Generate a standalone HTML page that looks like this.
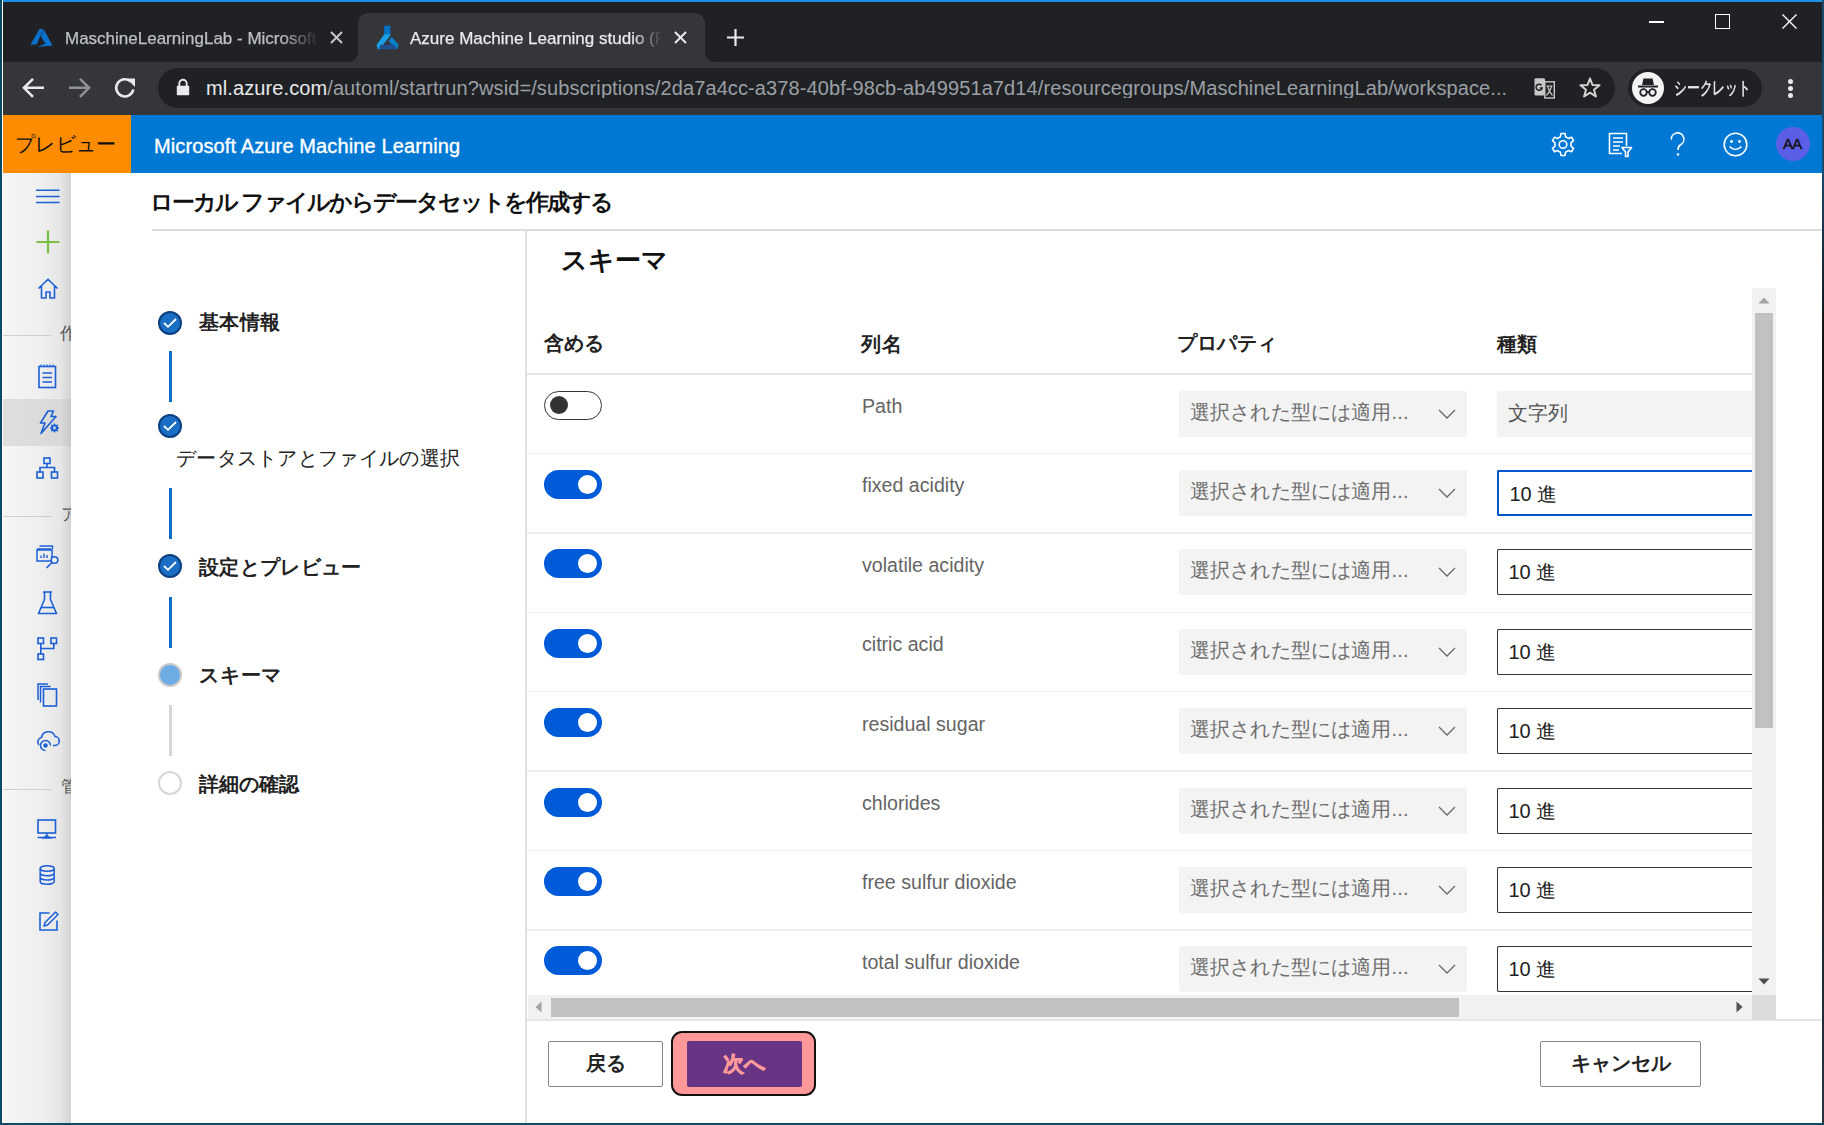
<!DOCTYPE html>
<html lang="ja"><head><meta charset="utf-8">
<style>
*{box-sizing:border-box;margin:0;padding:0}
html,body{width:1824px;height:1125px;overflow:hidden;background:#fff;font-family:"Liberation Sans",sans-serif;position:relative}
.a{position:absolute}
.t{position:absolute;white-space:nowrap;line-height:1}
svg{position:absolute;overflow:visible}
#titlebar{left:0;top:0;width:1824px;height:62px;background:#202124}
#topline{left:0;top:0;width:1824px;height:2px;background:#1e8fe6}
#tab2{left:358px;top:13px;width:347px;height:49px;background:#35363a;border-radius:10px 10px 0 0}
#toolbar{left:0;top:62px;width:1824px;height:53px;background:#35363a}
#omni{left:157.5px;top:68px;width:1457.5px;height:40px;border-radius:20px;background:#202124}
#incog{left:1628px;top:69px;width:134px;height:38px;border-radius:19px;background:#202124}
#hdr{left:0;top:115px;width:1824px;height:58px;background:#0078d4}
#prev{left:0;top:115px;width:131px;height:58px;background:#ff8c00}
#nav{left:0;top:173px;width:71px;height:952px;background:linear-gradient(to right,#f6f6f6 0%,#efefef 55%,#e6e6e6 85%,#d2d2d2 100%)}
#navsel{left:2px;top:399px;width:69px;height:47px;background:linear-gradient(to right,#dedede 0%,#d9d9d9 85%,#c9c9c9 100%)}
#lborder{left:0;top:0;width:1.6px;height:1125px;background:#0b4a66;box-shadow:1px 0 0 #fff}
#rborder{left:1822px;top:0;width:2px;height:1125px;background:linear-gradient(#1b4a6e 0%,#1b4a6e 15%,#111 30%,#111 60%,#2a3440 100%)}
#bborder{left:0;top:1123px;width:1824px;height:2px;background:#154a66}
.navsep{position:absolute;left:2px;width:50px;height:1px;background:#cfcfcf;margin-top:1px}
.row{position:absolute;left:527px;width:1225px;height:1.5px;background:#efefef}
.tog{position:absolute;left:544px;width:58px;height:29px;border-radius:15px}
.tog.on{background:#005bd8}
.tog.on::after{content:"";position:absolute;left:34px;top:5px;width:19px;height:19px;border-radius:50%;background:#fff}
.tog.off{border:1.5px solid #333;background:#fff}
.tog.off::after{content:"";position:absolute;left:5px;top:4.5px;width:18px;height:18px;border-radius:50%;background:#333}
.cname{position:absolute;left:862px;font-size:19.6px;color:#646464;white-space:nowrap;line-height:1}
.dd{position:absolute;left:1179px;width:288px;height:46px;background:#f3f3f3;border-radius:2px}
.ddt{position:absolute;left:11px;top:11px;font-size:20px;letter-spacing:0.15px;color:#6e6e6e;white-space:nowrap;line-height:1}
.ddc{position:absolute;left:259px;top:18px}
.ty{position:absolute;left:1496.5px;width:255px;height:46px;border:1.5px solid #333;background:#fff;border-radius:2px 0 0 2px;border-right:none}
.ty.sel{border:2.5px solid #0058d0;border-right:none}
.tyt{position:absolute;left:11px;top:12px;font-size:20px;color:#222;white-space:nowrap;line-height:1}
.step{position:absolute;left:158px;width:24px;height:24px;border-radius:50%}
.step.done{background:#1a6ec4;border:2px solid #0b3f80}
.sline{position:absolute;left:169px;width:3px;height:51px;background:#0f6cc8}
.slabel{position:absolute;font-size:20px;color:#222;white-space:nowrap;line-height:1}
.btn{position:absolute;height:46px;border:1.5px solid #8a8886;border-radius:2px;background:#fff;font-size:20px;font-weight:bold;color:#222;text-align:center;line-height:43px}
</style></head><body>
<div class="a" id="titlebar"></div>
<div class="a" id="topline"></div>
<div class="a" id="tab2"></div>
<div class="a" id="toolbar"></div>
<div class="a" style="left:348px;top:52px;width:10px;height:10px;background:radial-gradient(circle at 0 0,#202124 9.5px,#35363a 10.5px)"></div>
<div class="a" style="left:705px;top:52px;width:10px;height:10px;background:radial-gradient(circle at 100% 0,#202124 9.5px,#35363a 10.5px)"></div>

<div class="a" id="omni"></div>
<div class="a" id="incog"></div>
<div class="a" id="hdr"></div>
<div class="a" id="prev"></div>
<div class="a" id="nav"></div>
<div class="a" id="navsel"></div>

<!-- chrome -->
<svg style="left:30px;top:28px" width="23" height="20" viewBox="0 0 23 20"><path d="M9.5 1 L13.5 1 L6.5 16.5 L0.5 16.5 Z" fill="#0b72cc"/><path d="M13.8 1.5 L22.5 17.5 L7.5 19 L15.5 15.5 L10.8 8.5 Z" fill="#0b72cc"/></svg>
<div class="t" style="left:65px;top:30px;font-size:17px;color:#bdc1c6;-webkit-text-stroke:0.25px #bdc1c6;width:253px;overflow:hidden;-webkit-mask-image:linear-gradient(to right,#000 85%,transparent 100%)">MaschineLearningLab - Microsoft Azure</div>
<svg style="left:330px;top:31px" width="13" height="13" viewBox="0 0 13 13"><path d="M1 1 L12 12 M12 1 L1 12" stroke="#c8cacd" stroke-width="1.9"/></svg>
<svg style="left:365px;top:15px" width="60" height="45" viewBox="0 0 60 45"><rect x="19.2" y="10.8" width="6.2" height="8.8" fill="#0072c6"/><path d="M19.2 19.3 L25.4 19.3 L25 21 L14.5 34.2 L12.8 34.2 L11.5 30 Z" fill="#1a9fe6"/><path d="M26.7 22 L33.5 29.5 L32.2 34.2 L31 34.2 L23.5 26 Z" fill="#0a7fcc"/><path d="M15.5 29.8 L29.8 29.8 L31.5 34.2 L14 34.2 Z" fill="#1e4f91"/></svg>
<div class="t" style="left:410px;top:30px;font-size:17px;color:#e8eaed;-webkit-text-stroke:0.25px #e8eaed;width:252px;overflow:hidden;-webkit-mask-image:linear-gradient(to right,#000 88%,transparent 100%)">Azure Machine Learning studio (Preview)</div>
<svg style="left:674px;top:31px" width="13" height="13" viewBox="0 0 13 13"><path d="M1 1 L12 12 M12 1 L1 12" stroke="#e8eaed" stroke-width="2"/></svg>
<svg style="left:726px;top:28px" width="19" height="19" viewBox="0 0 19 19"><path d="M9.5 1 V18 M1 9.5 H18" stroke="#e8eaed" stroke-width="2.2"/></svg>
<div class="a" style="left:1649px;top:21px;width:15px;height:1.6px;background:#fff"></div>
<div class="a" style="left:1715px;top:14px;width:15px;height:15px;border:1.6px solid #fff"></div>
<svg style="left:1782px;top:14px" width="15" height="15" viewBox="0 0 15 15"><path d="M0.5 0.5 L14.5 14.5 M14.5 0.5 L0.5 14.5" stroke="#fff" stroke-width="1.4"/></svg>
<svg style="left:22px;top:77px" width="23" height="22" viewBox="0 0 23 22"><path d="M22 10.8 H3.5 M11 1.8 L2 10.8 L11 19.8" fill="none" stroke="#e8eaed" stroke-width="2.6"/></svg>
<svg style="left:68px;top:77px" width="23" height="22" viewBox="0 0 23 22"><path d="M1 10.8 H19.5 M12 1.8 L21 10.8 L12 19.8" fill="none" stroke="#8e9196" stroke-width="2.6"/></svg>
<svg style="left:114px;top:76px" width="23" height="23" viewBox="0 0 23 23"><path d="M19.3 13.5 A8.6 8.6 0 1 1 16.8 5.6" fill="none" stroke="#e8eaed" stroke-width="2.6"/><path d="M12.6 2.5 H21 V10.9 Z" fill="#e8eaed"/></svg>
<svg style="left:176px;top:78px" width="14" height="18" viewBox="0 0 14 18"><path d="M3.3 8 V5.5 A3.7 3.7 0 0 1 10.7 5.5 V8" fill="none" stroke="#e8eaed" stroke-width="1.9"/><rect x="0.8" y="7.8" width="12.4" height="9.4" rx="0.8" fill="#e8eaed"/></svg>
<div class="t" style="left:206px;top:78px;font-size:20px;letter-spacing:0.1px;color:#9aa0a6;width:1304px;overflow:hidden"><span style="color:#e8eaed">ml.azure.com</span>/automl/startrun?wsid=/subscriptions/2da7a4cc-a378-40bf-98cb-ab49951a7d14/resourcegroups/MaschineLearningLab/workspace...</div>
<svg style="left:1533.5px;top:77.5px" width="22" height="22" viewBox="0 0 22 22"><rect x="0.5" y="0.3" width="10.5" height="17.2" rx="1.2" fill="#c8c8c8"/><path d="M7.6 7.3 A3.1 3.1 0 1 0 8.2 10 H5.6" fill="none" stroke="#202124" stroke-width="1.5"/><rect x="10.8" y="3.8" width="9.5" height="16.2" fill="#202124" stroke="#c8c8c8" stroke-width="1.4"/><path d="M12.5 8 H18.5 M13.5 8 Q15 14 18.5 17.5 M17.5 8.5 Q16 14 12.5 17.5" fill="none" stroke="#c8c8c8" stroke-width="1.2"/></svg>
<svg style="left:1579px;top:77px" width="22" height="21" viewBox="0 0 22 21"><path d="M11 1.5 L13.5 8 L20.5 8.3 L15 12.8 L16.9 19.5 L11 15.7 L5.1 19.5 L7 12.8 L1.5 8.3 L8.5 8 Z" fill="none" stroke="#d4d4d4" stroke-width="2" stroke-linejoin="round"/></svg>
<div class="a" style="left:1632px;top:72px;width:32px;height:32px;border-radius:50%;background:#f1f3f4"></div>
<svg style="left:1636px;top:77px" width="24" height="22" viewBox="0 0 24 22"><path d="M6 8 L7.5 1.5 H16.5 L18 8 Z" fill="#202124"/><rect x="2" y="8.5" width="20" height="2" fill="#202124"/><circle cx="7.5" cy="15.5" r="3.3" fill="none" stroke="#202124" stroke-width="1.8"/><circle cx="16.5" cy="15.5" r="3.3" fill="none" stroke="#202124" stroke-width="1.8"/><path d="M10.8 15 H13.2" stroke="#202124" stroke-width="1.8"/></svg>
<div class="t" style="left:1674px;top:79px;font-size:18px;color:#e8eaed;-webkit-text-stroke:0.5px #e8eaed;transform:scaleX(0.71);transform-origin:0 0">シークレット</div>
<div class="a" style="left:1788px;top:79px;width:5px;height:5px;border-radius:50%;background:#e8eaed"></div>
<div class="a" style="left:1788px;top:86px;width:5px;height:5px;border-radius:50%;background:#e8eaed"></div>
<div class="a" style="left:1788px;top:93px;width:5px;height:5px;border-radius:50%;background:#e8eaed"></div>
<!-- aml header -->
<div class="t" style="left:15px;top:134px;font-size:20px;letter-spacing:0.3px;color:#111">プレビュー</div>
<div class="t" style="left:154px;top:136px;font-size:20px;letter-spacing:0.12px;color:#fff;-webkit-text-stroke:0.35px #fff">Microsoft Azure Machine Learning</div>
<svg style="left:1550px;top:132px" width="26" height="26" viewBox="0 0 26 26"><path d="M11 1.5 H15 L15.6 4.8 L18.4 6.4 L21.5 5.2 L23.5 8.7 L21 10.9 V14.1 L23.5 16.3 L21.5 19.8 L18.4 18.6 L15.6 20.2 L15 23.5 H11 L10.4 20.2 L7.6 18.6 L4.5 19.8 L2.5 16.3 L5 14.1 V10.9 L2.5 8.7 L4.5 5.2 L7.6 6.4 L10.4 4.8 Z" fill="none" stroke="#fff" stroke-width="1.6" stroke-linejoin="round"/><circle cx="13" cy="12.5" r="3.8" fill="none" stroke="#fff" stroke-width="1.6"/></svg>
<svg style="left:1608px;top:132px" width="26" height="26" viewBox="0 0 26 26"><path d="M14 21.5 H1.5 V1.5 H18.5 V14" fill="none" stroke="#fff" stroke-width="1.6"/><path d="M5 6 H15 M5 10 H15 M5 14 H12 M5 18 H11" stroke="#fff" stroke-width="1.6"/><path d="M14 15.5 H23.5 L20 20 V24.5 L17.5 24.5 V20 Z" fill="none" stroke="#fff" stroke-width="1.6" stroke-linejoin="round"/></svg>
<svg style="left:1669px;top:132px" width="18" height="25" viewBox="0 0 18 25"><path d="M2.3 7.5 A6.3 6.3 0 1 1 11.5 12.8 C9.7 13.8 9 15 9 18" fill="none" stroke="#fff" stroke-width="1.6"/><circle cx="9" cy="22.5" r="1.2" fill="#fff"/></svg>
<svg style="left:1723px;top:132px" width="25" height="25" viewBox="0 0 25 25"><circle cx="12.5" cy="12.5" r="11.3" fill="none" stroke="#fff" stroke-width="1.6"/><circle cx="8.5" cy="9.5" r="1.4" fill="#fff"/><circle cx="16.5" cy="9.5" r="1.4" fill="#fff"/><path d="M6.5 14.5 Q12.5 20.5 18.5 14.5" fill="none" stroke="#fff" stroke-width="1.6"/></svg>
<div class="a" style="left:1776px;top:127px;width:34px;height:34px;border-radius:50%;background:#5b5fe8"></div>
<div class="t" style="left:1783px;top:136px;font-size:15px;font-weight:normal;-webkit-text-stroke:0.4px #111;color:#111;letter-spacing:-0.8px">AA</div>



<!-- nav icons -->
<svg style="left:36px;top:189px" width="24" height="15" viewBox="0 0 24 15"><path d="M0 1.3 H23.5 M0 7.5 H23.5 M0 13.5 H23.5" stroke="#1a5fd6" stroke-width="1.5"/></svg>
<svg style="left:36px;top:230px" width="24" height="24" viewBox="0 0 24 24"><path d="M12 0.5 V23.5 M0.5 12 H23.5" stroke="#7ac143" stroke-width="2.2"/></svg>
<svg style="left:37px;top:278px" width="22" height="21" viewBox="0 0 22 21"><path d="M1.5 10.5 L11 1.3 L20.5 10.5 M4.5 8 V20 H9 V14 H13 V20 H17.5 V8" fill="none" stroke="#1a5fd6" stroke-width="1.6" stroke-linejoin="round"/></svg>
<div class="navsep" style="top:334px"></div>
<div class="t" style="left:60px;top:325px;font-size:17px;color:#555;width:11px;overflow:hidden">作</div>
<svg style="left:38px;top:364px" width="19" height="25" viewBox="0 0 19 25"><rect x="1" y="2.5" width="16.5" height="21" fill="none" stroke="#1a5fd6" stroke-width="1.6"/><path d="M4.5 9 H14 M4.5 13.5 H14 M4.5 18 H14" stroke="#1a5fd6" stroke-width="1.6"/><path d="M3 0.5 V2.5 M6 0.5 V2.5 M9 0.5 V2.5 M12 0.5 V2.5 M15 0.5 V2.5" stroke="#1a5fd6" stroke-width="1.2"/></svg>
<svg style="left:39px;top:410px" width="21" height="25" viewBox="0 0 21 25"><path d="M9 1 H14.5 L12 6.5 H17 L2 23.5 L6 13 H1.5 Z" fill="none" stroke="#1a5fd6" stroke-width="1.6" stroke-linejoin="round"/><circle cx="15.5" cy="18" r="2.6" fill="none" stroke="#1a5fd6" stroke-width="1.8"/><path d="M15.5 13.5 V22.5 M11 18 H20 M12.3 14.8 L18.7 21.2 M18.7 14.8 L12.3 21.2" stroke="#1a5fd6" stroke-width="1.3"/><circle cx="15.5" cy="18" r="1.4" fill="#dadada"/></svg>
<svg style="left:36px;top:457px" width="23" height="22" viewBox="0 0 23 22"><rect x="8" y="1" width="6" height="5.5" fill="none" stroke="#1a5fd6" stroke-width="1.6"/><rect x="1" y="15" width="6" height="6" fill="none" stroke="#1a5fd6" stroke-width="1.6"/><rect x="15.5" y="15" width="6" height="6" fill="none" stroke="#1a5fd6" stroke-width="1.6"/><path d="M11 6.5 V10.5 M4 15 V10.5 H18.5 V15" fill="none" stroke="#1a5fd6" stroke-width="1.6"/></svg>
<div class="navsep" style="top:515px"></div>
<div class="t" style="left:61px;top:506px;font-size:17px;color:#555;width:10px;overflow:hidden">ア</div>
<svg style="left:36px;top:545px" width="24" height="24" viewBox="0 0 24 24"><path d="M3.5 1 H16.5 V4 M1 4 H14.5 V5.5" fill="none" stroke="#1a5fd6" stroke-width="1.4"/><rect x="1" y="5" width="15" height="11" fill="none" stroke="#1a5fd6" stroke-width="1.5"/><path d="M5 13 V10.5 M8 13 V8.5 M11 13 V10" stroke="#1a5fd6" stroke-width="1.4"/><circle cx="18.5" cy="15" r="3.3" fill="#f0f0f0" stroke="#1a5fd6" stroke-width="1.6"/><path d="M16 17.5 L10.5 23" stroke="#1a5fd6" stroke-width="1.6"/></svg>
<svg style="left:37px;top:591px" width="21" height="24" viewBox="0 0 21 24"><path d="M6 1 H15 M7.5 1 V8.5 L1.5 22.5 H19.5 L13.5 8.5 V1" fill="none" stroke="#1a5fd6" stroke-width="1.6" stroke-linejoin="round"/><path d="M4 16.5 H17" stroke="#1a5fd6" stroke-width="1.6"/></svg>
<svg style="left:37px;top:637px" width="21" height="24" viewBox="0 0 21 24"><rect x="1" y="1" width="5.5" height="5.5" fill="none" stroke="#1a5fd6" stroke-width="1.6"/><rect x="14" y="1" width="5.5" height="5.5" fill="none" stroke="#1a5fd6" stroke-width="1.6"/><rect x="1" y="17" width="5.5" height="5.5" fill="none" stroke="#1a5fd6" stroke-width="1.6"/><path d="M3.8 6.5 V17 M3.8 11.5 H16.8 V6.5" fill="none" stroke="#1a5fd6" stroke-width="1.6"/></svg>
<svg style="left:37px;top:683px" width="21" height="24" viewBox="0 0 21 24"><path d="M1 17 V1 H11 M3.5 19.5 V3.5 H13.5" fill="none" stroke="#1a5fd6" stroke-width="1.5"/><rect x="6.5" y="6" width="13" height="17" fill="none" stroke="#1a5fd6" stroke-width="1.6"/></svg>
<svg style="left:36px;top:731px" width="24" height="21" viewBox="0 0 24 21"><path d="M17 14.5 H18.5 A4.5 4.5 0 0 0 19 5.5 A7 7 0 0 0 5.5 6.5 A4.5 4.5 0 0 0 3 14" fill="none" stroke="#1a5fd6" stroke-width="1.6"/><path d="M9.5 19.5 A5 5 0 1 1 14.5 14.5" fill="none" stroke="#1a5fd6" stroke-width="1.6"/><circle cx="9.5" cy="14.5" r="2.2" fill="#1a5fd6"/></svg>
<div class="navsep" style="top:788px"></div>
<div class="t" style="left:61px;top:778px;font-size:17px;color:#555;width:10px;overflow:hidden">管</div>
<svg style="left:37px;top:819px" width="20" height="21" viewBox="0 0 20 21"><rect x="1" y="1" width="17.5" height="13" fill="none" stroke="#1a5fd6" stroke-width="1.6"/><path d="M9.8 14 V16.5 M6.5 19 L9.8 16.5 L13 19 Z M0.5 18.5 H19" fill="none" stroke="#1a5fd6" stroke-width="1.5"/></svg>
<svg style="left:39px;top:865px" width="17" height="21" viewBox="0 0 17 21"><ellipse cx="8.2" cy="3.5" rx="7" ry="2.8" fill="none" stroke="#1a5fd6" stroke-width="1.5"/><path d="M1.2 3.5 V16.5 A7 2.8 0 0 0 15.2 16.5 V3.5 M1.2 8 A7 2.8 0 0 0 15.2 8 M1.2 12.3 A7 2.8 0 0 0 15.2 12.3" fill="none" stroke="#1a5fd6" stroke-width="1.5"/></svg>
<svg style="left:39px;top:911px" width="20" height="20" viewBox="0 0 20 20"><path d="M10.5 2 H1 V19 H18 V9.5" fill="none" stroke="#1a5fd6" stroke-width="1.6"/><path d="M5 15 L6 11.5 L16.5 1 L19 3.5 L8.5 14 Z" fill="none" stroke="#1a5fd6" stroke-width="1.5" stroke-linejoin="round"/></svg>

<!-- content -->
<div class="t" style="left:150px;top:191.5px;font-size:22.5px;letter-spacing:-2px;font-weight:bold;color:#111">ローカル ファイルからデータセットを作成する</div>
<div class="a" style="left:152px;top:229px;width:1670px;height:2px;background:#dcdcdc"></div>
<div class="a" style="left:525px;top:230px;width:2px;height:895px;background:#e1e1e1"></div>

<!-- steps -->
<div class="step done" style="top:311px"></div>
<div class="sline" style="top:351px"></div>
<div class="step done" style="top:414px"></div>
<div class="sline" style="top:488px"></div>
<div class="step done" style="top:554px"></div>
<div class="sline" style="top:597px"></div>
<div class="step" style="top:663px;background:#6cace4;border:2px solid #c8c8c8"></div>
<div class="sline" style="top:705px;background:#d6d6d6"></div>
<div class="step" style="top:771px;background:#fff;border:2px solid #d6d6d6"></div>
<svg style="left:163px;top:318px" width="14" height="10" viewBox="0 0 14 10"><path d="M1 5 L5 8.8 L13 1" fill="none" stroke="#fff" stroke-width="1.8"/></svg>
<svg style="left:163px;top:421px" width="14" height="10" viewBox="0 0 14 10"><path d="M1 5 L5 8.8 L13 1" fill="none" stroke="#fff" stroke-width="1.8"/></svg>
<svg style="left:163px;top:561px" width="14" height="10" viewBox="0 0 14 10"><path d="M1 5 L5 8.8 L13 1" fill="none" stroke="#fff" stroke-width="1.8"/></svg>
<div class="slabel" style="left:199px;top:312px;font-weight:bold;letter-spacing:0.3px">基本情報</div>
<div class="slabel" style="left:176px;top:448px;letter-spacing:0.3px">データストアとファイルの選択</div>
<div class="slabel" style="left:199px;top:557px;font-weight:bold;letter-spacing:0.35px">設定とプレビュー</div>
<div class="slabel" style="left:199px;top:665px;font-weight:bold;letter-spacing:0.8px">スキーマ</div>
<div class="slabel" style="left:199px;top:774px;font-weight:bold">詳細の確認</div>

<!-- schema -->
<div class="t" style="left:561px;top:247px;font-size:26px;font-weight:bold;color:#111">スキーマ</div>
<div class="t" style="left:544px;top:333px;font-size:20px;font-weight:bold;color:#222">含める</div>
<div class="t" style="left:861px;top:334px;font-size:20px;letter-spacing:0.5px;font-weight:bold;color:#222">列名</div>
<div class="t" style="left:1177px;top:333px;font-size:20px;font-weight:bold;color:#222">プロパティ</div>
<div class="t" style="left:1497px;top:334px;font-size:20px;font-weight:bold;color:#222">種類</div>
<div class="row" style="top:373px;height:2px;background:#e6e6e6"></div>
<div id="rows"><div class="tog off" style="top:390.6px"></div>
<div class="cname" style="top:397px">Path</div>
<div class="dd" style="top:390.6px"><div class="ddt">選択された型には適用...</div><svg class="ddc" width="18" height="10" viewBox="0 0 18 10"><path d="M1 1 L9 9 L17 1" fill="none" stroke="#6a6a6a" stroke-width="1.3"/></svg></div>
<div class="ty" style="top:390.6px;background:#f3f3f3;border:none"><div class="tyt" style="color:#555">文字列</div></div>
<div class="row" style="top:452.7px"></div>
<div class="tog on" style="top:470.0px"></div>
<div class="cname" style="top:476px">fixed acidity</div>
<div class="dd" style="top:470.0px"><div class="ddt">選択された型には適用...</div><svg class="ddc" width="18" height="10" viewBox="0 0 18 10"><path d="M1 1 L9 9 L17 1" fill="none" stroke="#6a6a6a" stroke-width="1.3"/></svg></div>
<div class="ty sel" style="top:470.0px"><div class="tyt">10 進</div></div>
<div class="row" style="top:532.1px"></div>
<div class="tog on" style="top:549.4px"></div>
<div class="cname" style="top:556px">volatile acidity</div>
<div class="dd" style="top:549.4px"><div class="ddt">選択された型には適用...</div><svg class="ddc" width="18" height="10" viewBox="0 0 18 10"><path d="M1 1 L9 9 L17 1" fill="none" stroke="#6a6a6a" stroke-width="1.3"/></svg></div>
<div class="ty" style="top:549.4px"><div class="tyt">10 進</div></div>
<div class="row" style="top:611.5px"></div>
<div class="tog on" style="top:628.8px"></div>
<div class="cname" style="top:635px">citric acid</div>
<div class="dd" style="top:628.8px"><div class="ddt">選択された型には適用...</div><svg class="ddc" width="18" height="10" viewBox="0 0 18 10"><path d="M1 1 L9 9 L17 1" fill="none" stroke="#6a6a6a" stroke-width="1.3"/></svg></div>
<div class="ty" style="top:628.8px"><div class="tyt">10 進</div></div>
<div class="row" style="top:690.9px"></div>
<div class="tog on" style="top:708.2px"></div>
<div class="cname" style="top:715px">residual sugar</div>
<div class="dd" style="top:708.2px"><div class="ddt">選択された型には適用...</div><svg class="ddc" width="18" height="10" viewBox="0 0 18 10"><path d="M1 1 L9 9 L17 1" fill="none" stroke="#6a6a6a" stroke-width="1.3"/></svg></div>
<div class="ty" style="top:708.2px"><div class="tyt">10 進</div></div>
<div class="row" style="top:770.3px"></div>
<div class="tog on" style="top:787.6px"></div>
<div class="cname" style="top:794px">chlorides</div>
<div class="dd" style="top:787.6px"><div class="ddt">選択された型には適用...</div><svg class="ddc" width="18" height="10" viewBox="0 0 18 10"><path d="M1 1 L9 9 L17 1" fill="none" stroke="#6a6a6a" stroke-width="1.3"/></svg></div>
<div class="ty" style="top:787.6px"><div class="tyt">10 進</div></div>
<div class="row" style="top:849.7px"></div>
<div class="tog on" style="top:867.0px"></div>
<div class="cname" style="top:873px">free sulfur dioxide</div>
<div class="dd" style="top:867.0px"><div class="ddt">選択された型には適用...</div><svg class="ddc" width="18" height="10" viewBox="0 0 18 10"><path d="M1 1 L9 9 L17 1" fill="none" stroke="#6a6a6a" stroke-width="1.3"/></svg></div>
<div class="ty" style="top:867.0px"><div class="tyt">10 進</div></div>
<div class="row" style="top:929.1px"></div>
<div class="tog on" style="top:946.4px"></div>
<div class="cname" style="top:953px">total sulfur dioxide</div>
<div class="dd" style="top:946.4px"><div class="ddt">選択された型には適用...</div><svg class="ddc" width="18" height="10" viewBox="0 0 18 10"><path d="M1 1 L9 9 L17 1" fill="none" stroke="#6a6a6a" stroke-width="1.3"/></svg></div>
<div class="ty" style="top:946.4px"><div class="tyt">10 進</div></div></div><!--/rows-->

<!-- scrollbars -->
<div class="a" style="left:1752px;top:288px;width:24px;height:732px;background:#f1f1f1"></div>
<div class="a" style="left:1755px;top:313px;width:18px;height:415px;background:#c1c1c1"></div>
<div class="a" style="left:528px;top:995px;width:1224px;height:25px;background:#f1f1f1"></div>
<div class="a" style="left:551px;top:998px;width:908px;height:18.5px;background:#c1c1c1"></div>
<div class="a" style="left:527px;top:1019px;width:1295px;height:2px;background:#e6e6e6"></div>

<svg style="left:1758px;top:297px" width="12" height="7" viewBox="0 0 12 7"><path d="M0.5 6.5 L6 0.5 L11.5 6.5 Z" fill="#a3a3a3"/></svg>
<svg style="left:1758px;top:978px" width="12" height="7" viewBox="0 0 12 7"><path d="M0.5 0.5 L6 6.5 L11.5 0.5 Z" fill="#505050"/></svg>
<svg style="left:535px;top:1001px" width="7" height="12" viewBox="0 0 7 12"><path d="M6.5 0.5 L0.5 6 L6.5 11.5 Z" fill="#a3a3a3"/></svg>
<svg style="left:1736px;top:1001px" width="7" height="12" viewBox="0 0 7 12"><path d="M0.5 0.5 L6.5 6 L0.5 11.5 Z" fill="#505050"/></svg>
<div class="a" style="left:1752px;top:995px;width:24px;height:25px;background:#dcdcdc"></div>
<!-- footer buttons -->
<div class="btn" style="left:548px;top:1041px;width:115px">戻る</div>
<div class="a" style="left:671px;top:1031px;width:145px;height:65px;border:2px solid #111;border-radius:11px;background:#ff9999"></div>
<div class="a" style="left:687px;top:1041px;width:115px;height:46px;background:#683584;border-radius:2px;color:#ff9b9b;font-size:20.5px;font-weight:bold;-webkit-text-stroke:0.7px #ff9b9b;text-align:center;line-height:46px">次へ</div>
<div class="btn" style="left:1540px;top:1041px;width:161px">キャンセル</div>

<div class="a" id="lborder"></div>
<div class="a" id="rborder"></div>
<div class="a" id="bborder"></div>
</body></html>
